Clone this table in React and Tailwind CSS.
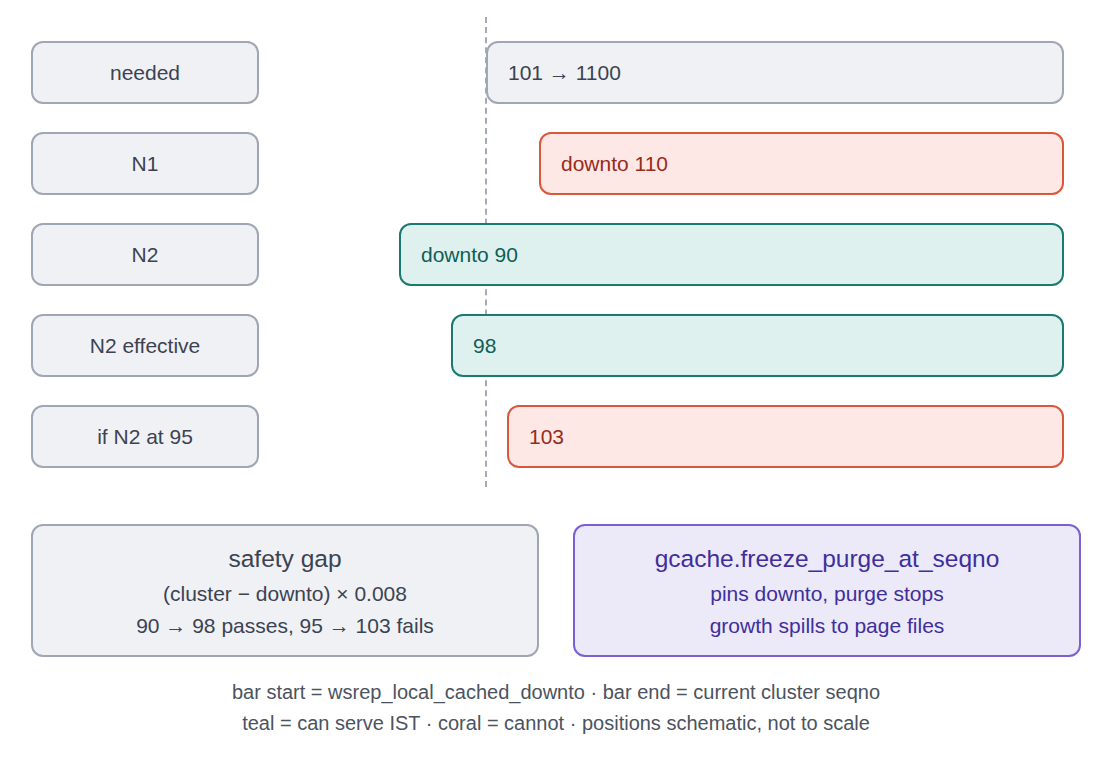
import React from "react";

const rows = [
  { label: "needed", text: "101 → 1100", start: 486, tone: "gray" },
  { label: "N1", text: "downto 110", start: 539, tone: "coral" },
  { label: "N2", text: "downto 90", start: 399, tone: "teal" },
  { label: "N2 effective", text: "98", start: 451, tone: "teal" },
  { label: "if N2 at 95", text: "103", start: 507, tone: "coral" },
];

const tones = {
  gray: "bg-[#f0f1f4] border-[#a0a7b4] text-[#3b4352]",
  coral: "bg-[#fde8e5] border-[#d9573b] text-[#982b1b]",
  teal: "bg-[#dff1ee] border-[#1b7a70] text-[#105e56]",
};

// track (bars area) starts at x=259 in the page
const TRACK_X = 259;

const App = () => {
  return (
    <div
      className="w-[1096px] h-[758px] bg-white relative"
      style={{ fontFamily: '"Liberation Sans", Arial, sans-serif' }}
    >
      {/* dashed marker for needed start */}
      <div className="absolute left-[485px] top-[17px] h-[470px] w-[2px] border-l-2 border-dashed border-[#a4abb6]" />

      <div className="relative flex flex-col gap-[28px] pt-[41px] pl-[31px] pr-[32px]">
        {rows.map((r) => (
          <div key={r.label} className="flex h-[63px]">
            <div className="w-[228px] shrink-0 flex items-center justify-center rounded-[12px] border-2 border-[#a0a7b4] bg-[#f0f1f4] text-[21px] text-[#3b4352]">
              {r.label}
            </div>
            <div
              className={`flex-1 flex items-center pl-[20px] rounded-[12px] border-2 text-[21px] ${tones[r.tone]}`}
              style={{ marginLeft: r.start - TRACK_X }}
            >
              {r.text}
            </div>
          </div>
        ))}
      </div>

      <div className="flex gap-[34px] pl-[31px] mt-[56px]">
        <div className="w-[508px] h-[133px] rounded-[12px] border-2 border-[#a0a7b4] bg-[#f0f1f4] text-[#3b4352] flex flex-col items-center pt-[14px]">
          <div className="text-[24.5px] leading-[38px]">safety gap</div>
          <div className="text-[21px] leading-[32px]">(cluster − downto) × 0.008</div>
          <div className="text-[21px] leading-[32px]">90 → 98 passes, 95 → 103 fails</div>
        </div>
        <div className="w-[508px] h-[133px] rounded-[12px] border-2 border-[#7b60d4] bg-[#ece9f9] text-[#3f2f9c] flex flex-col items-center pt-[14px]">
          <div className="text-[24.5px] leading-[38px]">gcache.freeze_purge_at_seqno</div>
          <div className="text-[21px] leading-[32px]">pins downto, purge stops</div>
          <div className="text-[21px] leading-[32px]">growth spills to page files</div>
        </div>
      </div>

      <div className="flex flex-col items-center w-[1112px] mt-[20px] text-[20px] leading-[31px] text-[#4b5361]">
        <div>bar start = wsrep_local_cached_downto · bar end = current cluster seqno</div>
        <div>teal = can serve IST · coral = cannot · positions schematic, not to scale</div>
      </div>
    </div>
  );
};

export default App;
